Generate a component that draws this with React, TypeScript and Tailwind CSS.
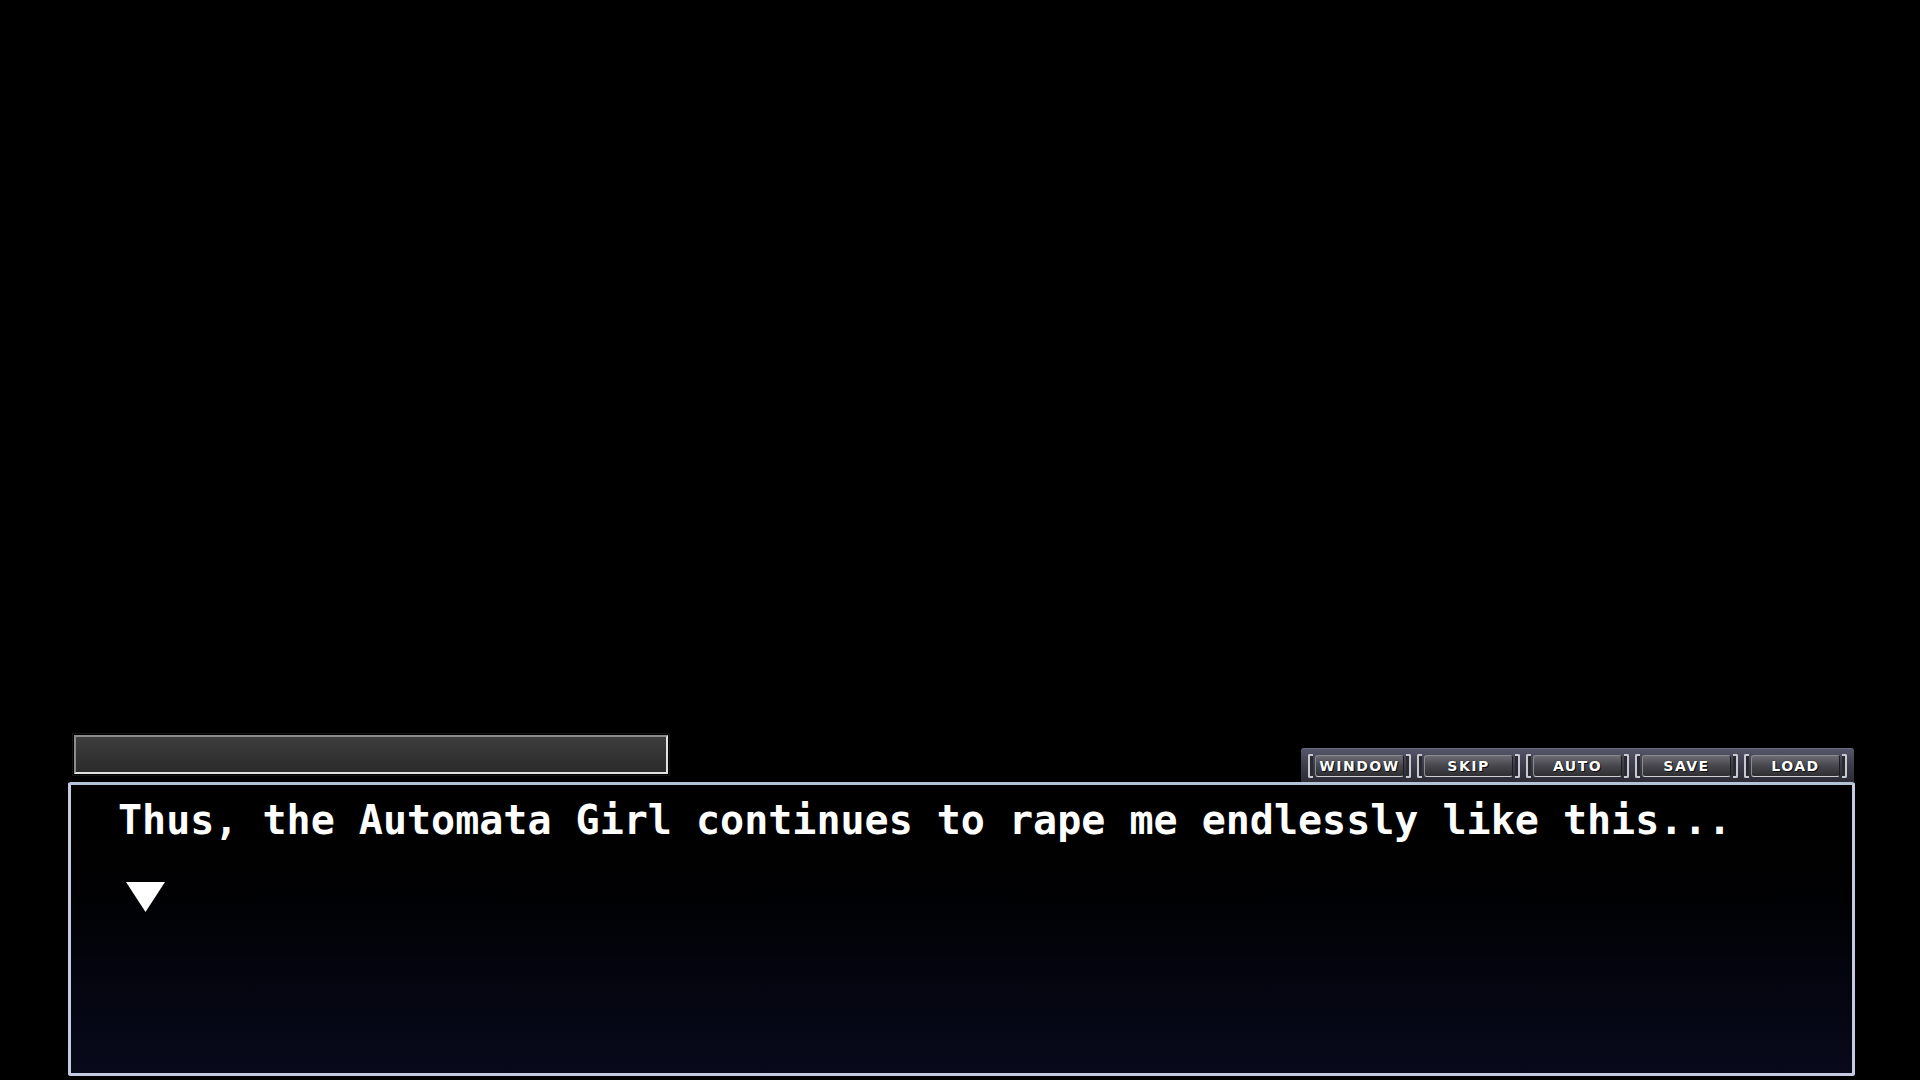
import React from 'react';

const buttons = ['WINDOW', 'SKIP', 'AUTO', 'SAVE', 'LOAD'];

function MenuButton({ label }: { label: string }) {
    return (
        <div className="flex h-full w-[109px] items-center px-[3px]">
            {/* left bracket */}
            <div className="h-[24px] w-[5px] rounded-l-[2px] border-y-2 border-l-2 border-[#c8c8d0] bg-[#2a2a30]" />
            <div className="mx-[2px] flex h-[22px] flex-1 items-center justify-center rounded-[3px] border border-t-[#8a8a92] border-l-[#8a8a92] border-r-[#1c1c20] border-b-[#cfcfd4] bg-gradient-to-b from-[#6c6c72] via-[#46464c] to-[#2e2e33]">
                <span className="text-[14px] font-black leading-none tracking-[1.5px] text-white [font-family:'DejaVu_Sans',sans-serif] [text-shadow:0_0_1px_#000,1px_1px_0_#111]">
                    {label}
                </span>
            </div>
            {/* right bracket */}
            <div className="h-[24px] w-[5px] rounded-r-[2px] border-y-2 border-r-2 border-[#c8c8d0] bg-[#2a2a30]" />
        </div>
    );
}

export default function App() {
    return (
        <div className="flex h-[1080px] w-full flex-col bg-black">
            {/* empty scene */}
            <div className="flex-1" />

            <div className="pl-[68px] pr-[65px] pb-[4px]">
                {/* name plate + menu bar */}
                <div className="flex h-[49px] items-end justify-between">
                    <div className="mb-[6px] ml-[4px] h-[43px] w-[598px] self-start border border-[#141414] p-px">
                        <div className="h-full w-full border-2 border-t-[#8c8c8c] border-l-[#8c8c8c] border-r-[#e2e2e2] border-b-[#e2e2e2] bg-gradient-to-b from-[#3e3e3e] via-[#333333] to-[#2c2c2c]" />
                    </div>
                    <div className="mr-[1px] flex h-[34px] items-center rounded-t-[3px] border-t border-[#6c6c80] bg-gradient-to-b from-[#56566a] via-[#3c3c4a] to-[#2c2c36] px-[4px]">
                        {buttons.map((b) => (
                            <MenuButton key={b} label={b} />
                        ))}
                    </div>
                </div>

                {/* message window */}
                <div className="h-[294px] rounded-[3px] border-[3px] border-[#c4cae2] border-t-[#b4c4d8] bg-gradient-to-b from-[#000000] via-[#020308] to-[#080a1c] pl-[47px] pt-[11px]">
                    <p className="text-[40px] font-bold leading-[48px] whitespace-pre text-white [font-family:'DejaVu_Sans_Mono','Liberation_Mono',monospace]">
                        Thus, the Automata Girl continues to rape me endlessly like this...
                    </p>
                    <svg className="ml-[8px] mt-[38px]" width="39" height="30" viewBox="0 0 39 30">
                        <polygon points="0,0 39,0 19.5,30" fill="#ffffff" />
                    </svg>
                </div>
            </div>
        </div>
    );
}
